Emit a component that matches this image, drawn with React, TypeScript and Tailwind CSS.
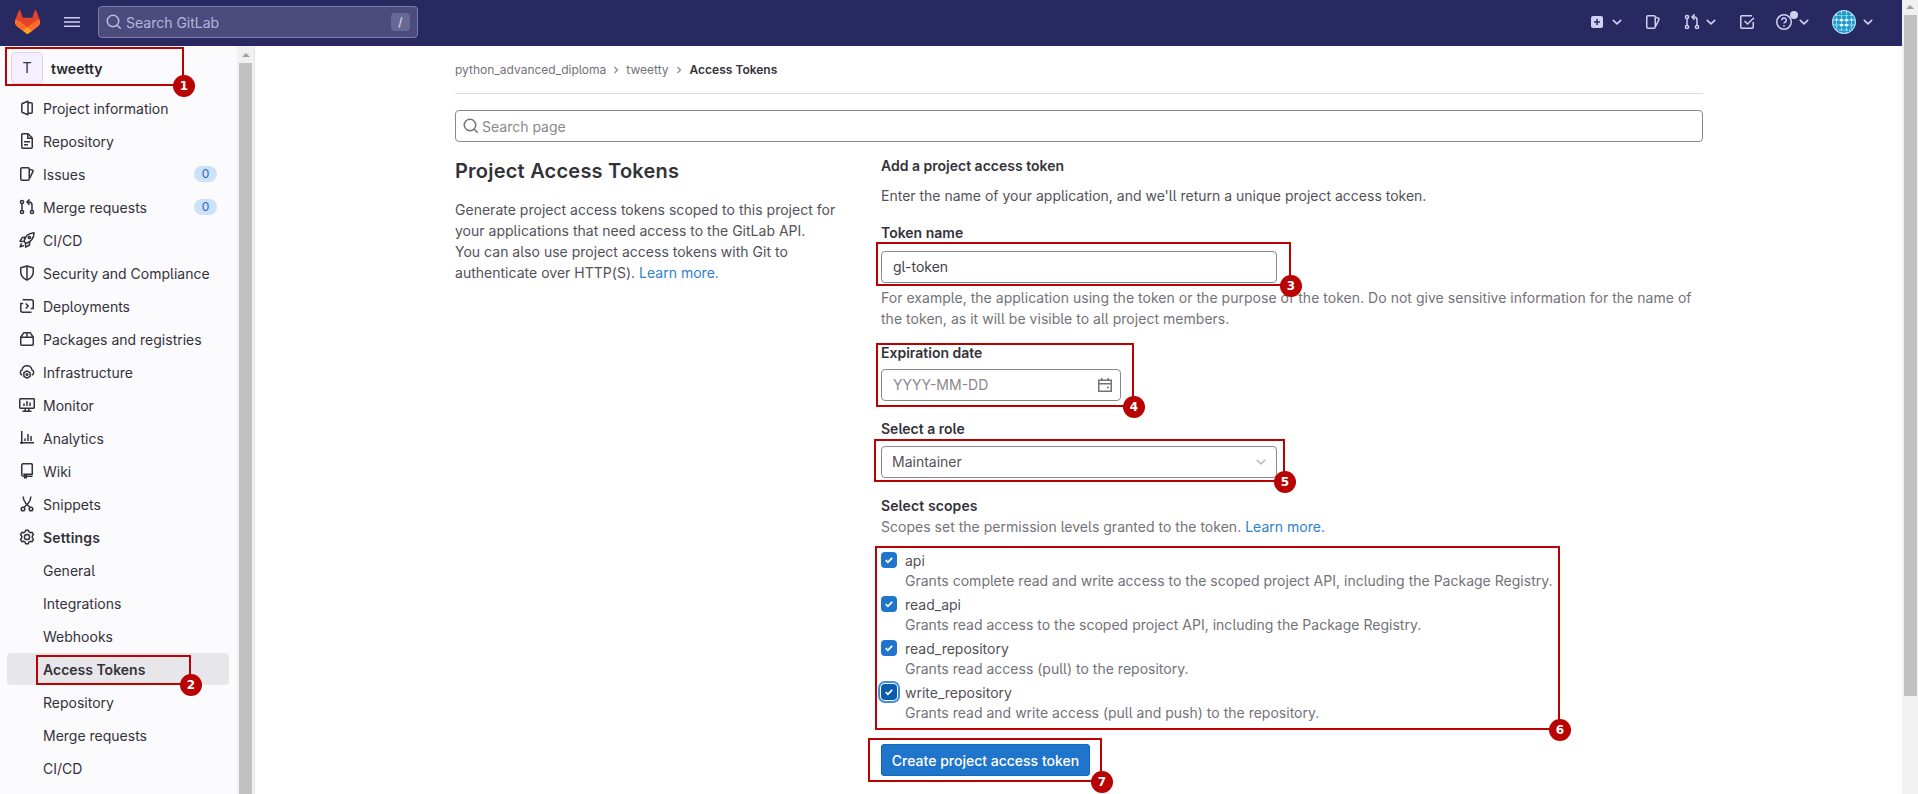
import React from "react";

type IconProps = { className?: string; children: React.ReactNode };

function Icon({ className = "", children }: IconProps) {
  return (
    <svg
      viewBox="0 0 16 16"
      width="16"
      height="16"
      fill="none"
      stroke="currentColor"
      strokeWidth="1.5"
      className={`shrink-0 ${className}`}
    >
      {children}
    </svg>
  );
}

const Issues = () => (
  <Icon>
    <rect x="1.75" y="1.75" width="8.5" height="12.5" rx="1.25" />
    <path d="M10.5 3.2l2.9.9a1 1 0 0 1 .6 1.3l-3.3 6.9" />
  </Icon>
);

const MergeRequests = () => (
  <Icon>
    <circle cx="3" cy="3" r="1.6" />
    <circle cx="3" cy="13" r="1.6" />
    <circle cx="13" cy="13" r="1.6" />
    <path d="M3 4.6v6.8M13 11.4V6a3 3 0 0 0-3-3H8.4" />
    <path d="M10.6.4L8 3l2.6 2.6" />
  </Icon>
);

const icons: Record<string, React.ReactNode> = {
  project: (
    <Icon>
      <path d="M9 1.2v13.6l-5.6-2.3a1 1 0 0 1-.6-.9V4.4a1 1 0 0 1 .6-.9z" strokeLinejoin="round" />
      <path d="M9 2.75h3.2a1 1 0 0 1 1 1v8.5a1 1 0 0 1-1 1H9" />
    </Icon>
  ),
  repository: (
    <Icon>
      <path d="M9 .75H3.75a1 1 0 0 0-1 1v12.5a1 1 0 0 0 1 1h8.5a1 1 0 0 0 1-1V5z" strokeLinejoin="round" />
      <path d="M8.75 1v4.25H13M5 8.75h6M5 11.75h4" />
    </Icon>
  ),
  issues: <Issues />,
  mr: <MergeRequests />,
  cicd: (
    <Icon>
      <path d="M5 9.5c.8-4.5 4.2-8.2 10-8.7.2 5.5-3.500 9.4-8 10.6z" strokeLinejoin="round" />
      <path d="M6 5.300L3.200 5.600 1 9.300l3.500.3M10.700 10l-.2 3-3.800 2.200-.3-3.500" strokeLinejoin="round" />
      <circle cx="10.400" cy="5.500" r="1.100" />
      <path d="M2.500 11.200L1.100 14.900l3.700-1.400" strokeLinejoin="round" />
    </Icon>
  ),
  security: (
    <Icon>
      <path d="M8 1L1.750 2.750V7c0 3.600 2.200 6.200 6.250 8.200 4.050-2 6.250-4.600 6.250-8.200V2.750z" strokeLinejoin="round" />
      <path d="M8 1v14" />
    </Icon>
  ),
  deployments: (
    <Icon>
      <path d="M3.500 1.750h8.750a2 2 0 0 1 2 2V10.500h-2.500M12.500 14.250H3.750a2 2 0 0 1-2-2V5.500h2.500" />
      <path d="M6.750 5.500L9.250 8l-2.500 2.500" />
    </Icon>
  ),
  packages: (
    <Icon>
      <path d="M1.750 6.250h12.500v7a1 1 0 0 1-1 1H2.750a1 1 0 0 1-1-1zM1.900 6l2.400-3.700a1 1 0 0 1 .8-.5h5.800a1 1 0 0 1 .8.500L14.100 6M8 1.750V6" />
    </Icon>
  ),
  infrastructure: (
    <Icon>
      <path d="M3.300 11A2.700 2.700 0 0 1 3 5.900 5.100 5.100 0 0 1 13 5.900 2.700 2.700 0 0 1 12.700 11" />
      <path d="M8 6.900l3.100 1.800v3.600L8 14.100l-3.100-1.800V8.700z" strokeLinejoin="round" />
      <circle cx="8" cy="10.500" r=".9" strokeWidth="1.300" />
    </Icon>
  ),
  monitor: (
    <Icon>
      <rect x=".75" y="1.750" width="14.500" height="9.500" rx=".7" />
      <path d="M5 6.500V9M8 4v5M11 5.500V9M3.500 14.250h9M6.200 11.500v2.500M9.800 11.500v2.500" />
    </Icon>
  ),
  analytics: (
    <Icon>
      <path d="M2.750 1v13M1 12.750h14M6 8.500V11M9 4v7M12 6v5" />
    </Icon>
  ),
  wiki: (
    <Icon>
      <path d="M5.500 13.250H4.250a1.500 1.500 0 0 1-1.500-1.500v-9.500a1.500 1.500 0 0 1 1.500-1.500h8a1 1 0 0 1 1 1v9.500H4.250M8 13.250h5.500" />
      <path d="M5 11.500h3V16l-1.500-1L5 16z" fill="currentColor" stroke="none" />
    </Icon>
  ),
  snippets: (
    <Icon>
      <circle cx="4" cy="13" r="1.800" />
      <circle cx="12" cy="13" r="1.800" />
      <path d="M4.100.5c.2 2.500 1 4.600 2.400 6.400L11 11.500M11.900.5c-.2 2.500-1 4.600-2.400 6.400L5 11.500" />
    </Icon>
  ),
  settings: (
    <Icon>
      <path
        d="M6.700 1.200h2.600l.6 1.700 1.400.8 1.800-.4 1.400 2.300-1.200 1.400v1.900l1.200 1.500-1.400 2.300-1.800-.4-1.400.8-.6 1.700H6.700l-.6-1.700-1.400-.8-1.800.4-1.400-2.300 1.200-1.500V7L1.500 5.600l1.400-2.300 1.800.4 1.400-.8z"
        strokeLinejoin="round"
      />
      <circle cx="8" cy="8" r="2.600" />
    </Icon>
  ),
};

function SearchIcon({ className = "" }: { className?: string }) {
  return (
    <Icon className={className}>
      <circle cx="7" cy="7" r="5.750" />
      <path d="M11 11l3.700 3.700" />
    </Icon>
  );
}

function Chevron({ className = "" }: { className?: string }) {
  return (
    <svg viewBox="0 0 12 12" width="12" height="12" fill="none" stroke="currentColor" strokeWidth="1.600" className={className}>
      <path d="M2.300 4.300L6 7.800l3.700-3.500" strokeLinecap="round" strokeLinejoin="round" />
    </svg>
  );
}

function Logo() {
  return (
    <svg viewBox="0 0 25 24" width="25" height="24" className="mt-[-2px]">
      <path d="M24.600 9.500L21.200.5a.8.8 0 0 0-1.500.1L17.300 7.700H7.700L5.300.6A.8.8 0 0 0 3.800.5L.4 9.500a6.300 6.300 0 0 0 2.100 7.300L12.500 24l10-7.200a6.300 6.300 0 0 0 2.100-7.300z" fill="#E24329" />
      <path d="M24.600 9.500a11.500 11.500 0 0 0-4.600 2L12.500 17.200l4.800 3.500 5.200-3.900a6.300 6.300 0 0 0 2.100-7.300z" fill="#FC6D26" />
      <path d="M.4 9.500a11.500 11.500 0 0 1 4.600 2l7.500 5.700-4.800 3.500-5.200-3.900A6.300 6.300 0 0 1 .4 9.500z" fill="#FC6D26" />
      <path d="M7.700 20.700l4 3a1.300 1.300 0 0 0 1.600 0l4-3-4.800-3.500z" fill="#FCA326" />
    </svg>
  );
}

function Identicon() {
  return (
    <svg viewBox="0 0 24 24" width="24" height="24">
      <defs>
        <clipPath id="avatar">
          <circle cx="12" cy="12" r="12" />
        </clipPath>
      </defs>
      <g clipPath="url(#avatar)">
        <rect width="24" height="24" fill="#1f9bcf" />
        <g stroke="#fff" strokeWidth=".8" opacity=".8">
          <path d="M9.500 1v22M14.500 1v22M4.500 3v18M19.500 3v18" strokeDasharray="3 1.200" />
          <path d="M1 10h22M1 15h22" />
          <path d="M2 5.500h20M2 20h20" strokeDasharray="1.500 1" />
        </g>
        <g fill="#fff">
          {[10, 15].map((y) =>
            [9.5, 14.5].map((x) => <circle key={`${x}-${y}`} cx={x} cy={y} r="1.500" />),
          )}
          {[4.5, 19.5].map((x) => (
            <circle key={x} cx={x} cy="10" r="1" />
          ))}
        </g>
      </g>
      <circle cx="12" cy="12" r="11.500" fill="none" stroke="#d1e6f5" />
    </svg>
  );
}

const nav: { icon: string; label: string; count?: string; bold?: boolean }[] = [
  { icon: "project", label: "Project information" },
  { icon: "repository", label: "Repository" },
  { icon: "issues", label: "Issues", count: "0" },
  { icon: "mr", label: "Merge requests", count: "0" },
  { icon: "cicd", label: "CI/CD" },
  { icon: "security", label: "Security and Compliance" },
  { icon: "deployments", label: "Deployments" },
  { icon: "packages", label: "Packages and registries" },
  { icon: "infrastructure", label: "Infrastructure" },
  { icon: "monitor", label: "Monitor" },
  { icon: "analytics", label: "Analytics" },
  { icon: "wiki", label: "Wiki" },
  { icon: "snippets", label: "Snippets" },
  { icon: "settings", label: "Settings", bold: true },
];

const subnav = ["General", "Integrations", "Webhooks", "Access Tokens", "Repository", "Merge requests", "CI/CD"];

const scopes = [
  { name: "api", text: "Grants complete read and write access to the scoped project API, including the Package Registry." },
  { name: "read_api", text: "Grants read access to the scoped project API, including the Package Registry." },
  { name: "read_repository", text: "Grants read access (pull) to the repository." },
  { name: "write_repository", text: "Grants read and write access (pull and push) to the repository.", focused: true },
];

function TopBar() {
  return (
    <header className="flex h-[46px] items-center bg-[#292961] pl-[15px] text-[#d1d0f0]">
      <Logo />
      <svg viewBox="0 0 16 12" width="16" height="12" className="mt-[-2px] ml-6" fill="currentColor">
        <path d="M0 1h16v1.600H0zM0 5.200h16v1.600H0zM0 9.400h16V11H0z" />
      </svg>
      <div className="ml-[18px] mt-[-2px] flex h-8 w-80 items-center rounded border border-[#7d7ca8] bg-[#4c4b7d] pl-[7px] pr-[7px]">
        <SearchIcon className="text-[#bdbce0]" />
        <span className="ml-1 flex-1 pt-0.5 text-sm text-[#b5b4dc]">Search GitLab</span>
        <span className="flex h-[18px] w-[19px] items-center justify-center rounded bg-[#696894] text-xs text-[#e4e3f5]">/</span>
      </div>
      <div className="ml-auto mt-[-2px] flex items-center pr-7">
        <svg viewBox="0 0 12 12" width="12" height="12">
          <rect width="12" height="12" rx="2" fill="currentColor" />
          <path d="M6 3v6M3 6h6" stroke="#292961" strokeWidth="1.500" />
        </svg>
        <Chevron className="ml-2" />
        <span className="ml-[22px] flex"><Issues /></span>
        <span className="ml-[23px] flex"><MergeRequests /></span>
        <Chevron className="ml-[5px]" />
        <span className="ml-[22px] flex">
          <Icon>
            <path d="M14.250 8v5.250a1 1 0 0 1-1 1H2.750a1 1 0 0 1-1-1V2.750a1 1 0 0 1 1-1H13" />
            <path d="M5.500 7l3 3L15 3.800" />
          </Icon>
        </span>
        <span className="relative ml-[21px] flex">
          <Icon>
            <circle cx="8" cy="8" r="7.250" />
            <path d="M5.800 6.300a2.200 2.200 0 1 1 3 2c-.6.300-.8.600-.8 1.300" />
            <circle cx="8" cy="11.800" r=".9" fill="currentColor" stroke="none" />
          </Icon>
          <span className="absolute -right-1.5 -top-[3px] size-2 rounded-full bg-[#d1d0f0]" />
        </span>
        <Chevron className="ml-1.5" />
        <span className="ml-[22px] flex"><Identicon /></span>
        <Chevron className="ml-1.5" />
      </div>
    </header>
  );
}

function Arrow() {
  return (
    <svg viewBox="0 0 8 4" width="8" height="4" className="shrink-0">
      <path d="M4 0l4 4H0z" fill="#a0a0a0" />
    </svg>
  );
}

function Sidebar() {
  return (
    <aside className="flex w-[255px] shrink-0 border-r border-[#e6e6e6] bg-[#fbfafd] text-[#333238]">
      <div className="w-[237px] text-sm">
        <div className="flex h-[46px] items-start pl-[11px] pt-1.5">
          <span className="flex size-8 items-center justify-center rounded border border-[#dcd7ea] bg-[#f4f0ff]">T</span>
          <span className="ml-2 pt-[7px] font-semibold tracking-[0.05px] text-[#28272d]">tweetty</span>
        </div>
        <ul className="flex flex-col gap-px">
          {nav.map((n) => (
            <li key={n.label} className="flex h-8 items-center pl-[19px] pr-5">
              {icons[n.icon]}
              <span className={n.bold ? "ml-2 pt-0.5 font-semibold tracking-[0.2px]" : "ml-2 pt-0.5"}>{n.label}</span>
              {n.count && (
                <span className="ml-auto flex h-4 w-[23px] items-center justify-center rounded-full bg-[#cbe2f9] text-xs text-[#2f68b4]">
                  {n.count}
                </span>
              )}
            </li>
          ))}
          {subnav.map((s) => (
            <li
              key={s}
              className={
                s === "Access Tokens"
                  ? "ml-[7px] flex h-8 w-[222px] items-center rounded bg-[#e7e6eb] pl-9 pt-0.5 font-semibold"
                  : "flex h-8 items-center pl-[43px] pt-0.5"
              }
            >
              {s}
            </li>
          ))}
        </ul>
      </div>
      <div className="flex w-[17px] flex-col items-center bg-[#f1f1f1] pt-[7px]">
        <Arrow />
        <div className="mt-1.5 w-[13px] flex-1 bg-[#c1c1c1]" />
      </div>
    </aside>
  );
}

function Crumb() {
  return (
    <svg viewBox="0 0 6 8" width="6" height="8" fill="none" stroke="#89888d" strokeWidth="1.200">
      <path d="M1.500 1l3 3-3 3" />
    </svg>
  );
}

function Main() {
  return (
    <main className="min-w-0 flex-1 pl-[200px] text-sm leading-[21px] text-[#535158]">
      <div className="w-[1248px]">
        <nav className="flex h-12 items-center border-b border-[#dcdcde] text-xs text-[#737278]">
          <span>python_advanced_diploma</span>
          <span className="ml-[7px]"><Crumb /></span>
          <span className="ml-[7px]">tweetty</span>
          <span className="ml-[7px]"><Crumb /></span>
          <span className="ml-2 font-semibold text-[#333238]">Access Tokens</span>
        </nav>
        <div className="mt-4 flex h-8 items-center rounded border border-[#89888d] pl-[7px] text-[#89888d]">
          <SearchIcon className="text-[#737278]" />
          <span className="ml-[3px] pt-px">Search page</span>
        </div>
        <div className="flex">
          <section className="w-[426px] pt-4">
            <h1 className="text-xl leading-[26px] font-semibold tracking-[0.22px] text-[#333238]">Project Access Tokens</h1>
            <p className="mt-[15px] w-[400px] tracking-[0.015px]">
              Generate project access tokens scoped to this project for
              <br />
              your applications that need access to the GitLab API.
              <br />
              You can also use project access tokens with Git to
              <br />
              authenticate over HTTP(S). <a className="text-[#2f7fd0]">Learn more.</a>
            </p>
          </section>
          <section className="w-[822px] pt-[13px]">
            <h2 className="font-semibold text-[#333238]">Add a project access token</h2>
            <p className="mt-[9px]">Enter the name of your application, and we'll return a unique project access token.</p>
            <div className="mt-4 font-semibold text-[#333238]">Token name</div>
            <div className="mt-2 flex h-8 w-[396px] items-center rounded border border-[#89888d] pb-px pl-[11px] text-[#434248]">
              gl-token
            </div>
            <p className="mt-1 tracking-[0.03px] text-[#737278]">
              For example, the application using the token or the purpose of the token. Do not give sensitive information for the name of
              <br />
              the token, as it will be visible to all project members.
            </p>
            <div className="mt-[13px] font-semibold text-[#333238]">Expiration date</div>
            <div className="mt-1.5 flex h-8 w-60 items-center justify-between rounded border border-[#89888d] pl-[11px] pr-[7px] text-[#89888d]">
              <span className="pb-px">YYYY-MM-DD</span>
              <Icon className="text-[#737278]">
                <path d="M1.750 3.250h12.500v11H1.750zM1.750 6.750h12.500M4.750 1v2.500M11.250 1v2.500" />
                <path d="M10 10.500h2" />
              </Icon>
            </div>
            <div className="mt-[17px] font-semibold text-[#333238]">Select a role</div>
            <div className="mt-[7px] flex h-8 w-[396px] items-center justify-between rounded border border-[#89888d] pl-2.5 pr-[9px] text-[#535158]">
              <span className="pb-px">Maintainer</span>
              <Chevron className="text-[#bfbfc3]" />
            </div>
            <div className="mt-[17px] font-semibold tracking-[0.1px] text-[#333238]">Select scopes</div>
            <p className="tracking-[0.02px] text-[#737278]">
              Scopes set the permission levels granted to the token. <a className="text-[#2f7fd0]">Learn more.</a>
            </p>
            <div className="mt-[13px] flex flex-col">
              {scopes.map((s) => (
                <div key={s.name} className="flex h-11">
                  <span
                    className={
                      s.focused
                        ? "mt-[2px] flex size-4 items-center justify-center rounded bg-[#0b5cad] shadow-[0_0_0_1px_#fff,0_0_0_3px_#428fdc]"
                        : "mt-[2px] flex size-4 items-center justify-center rounded bg-[#1f75cb]"
                    }
                  >
                    <svg viewBox="0 0 8 8" width="8" height="8" fill="none" stroke="#fff" strokeWidth="1.800">
                      <path d="M.8 4.200l2.100 2.100L7.200 1.800" />
                    </svg>
                  </span>
                  <div className="ml-2">
                    <div className="h-5">{s.name}</div>
                    <div className="tracking-[0.01px] text-[#737278]">{s.text}</div>
                  </div>
                </div>
              ))}
            </div>
            <div className="mt-[18px] flex h-8 w-[209px] items-center justify-center rounded bg-[#1f75cb] font-medium text-white shadow-[inset_0_0_0_1px_#1068bf]">
              Create project access token
            </div>
          </section>
        </div>
      </div>
    </main>
  );
}

function Mark({ n, className }: { n: number; className: string }) {
  return (
    <div className={`absolute border-2 border-[#b90202] ${className}`}>
      <span className="absolute -bottom-[13px] -right-[13px] flex size-[22px] items-center justify-center rounded-full bg-[#b90202] font-['DejaVu_Sans',sans-serif] text-xs font-bold text-white">
        {n}
      </span>
    </div>
  );
}

export default function App() {
  return (
    <div className="relative flex h-[794px] w-[1918px] overflow-hidden bg-white font-['Inter',sans-serif] [font-feature-settings:'cv05']">
      <div className="flex w-[1902px] flex-col">
        <TopBar />
        <div className="flex min-h-0 flex-1">
          <Sidebar />
          <Main />
        </div>
      </div>
      <div className="flex w-4 flex-col items-center bg-[#f1f1f1] pt-[5px]">
        <Arrow />
        <div className="mt-1.5 h-[681px] w-[13px] bg-[#c1c1c1]" />
      </div>
      <Mark n={1} className="left-[5px] top-[47px] h-[39px] w-[179px]" />
      <Mark n={2} className="left-[36px] top-[655px] h-[30px] w-[155px]" />
      <Mark n={3} className="left-[876px] top-[242px] h-[44px] w-[415px]" />
      <Mark n={4} className="left-[876px] top-[343px] h-[64px] w-[258px]" />
      <Mark n={5} className="left-[874px] top-[439px] h-[43px] w-[411px]" />
      <Mark n={6} className="left-[875px] top-[546px] h-[184px] w-[685px]" />
      <Mark n={7} className="left-[868px] top-[738px] h-[44px] w-[234px]" />
    </div>
  );
}
